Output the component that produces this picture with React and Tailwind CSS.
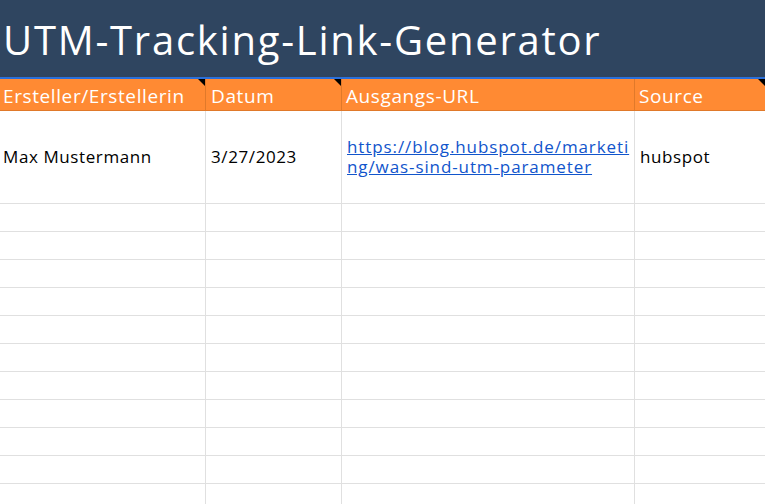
const COLS = 'grid grid-cols-[206px_136px_293px_1fr]';
const EMPTY_ROWS = 11;

function Corner() {
  return (
    <span className="absolute right-0 top-0 w-0 h-0 border-t-[7px] border-l-[7px] border-t-black border-l-transparent" />
  );
}

export default function App() {
  return (
    <div
      className="w-[765px] h-[504px] overflow-hidden bg-white"
      style={{ fontFamily: '"Open Sans", "Noto Sans", sans-serif' }}
    >
      {/* Title */}
      <div className="h-[77px] bg-[#2f4560] flex items-center pl-[3px] pt-[3px]">
        <h1 className="text-white text-[40px] leading-none tracking-[1.75px]">UTM-Tracking-Link-Generator</h1>
      </div>
      <div className="h-[2px] bg-[#2a6fdb]" />

      {/* Header row */}
      <div className={`${COLS} h-[32px] bg-[#ff8a33] text-white text-[19px] tracking-[0.6px] border-b border-[#e0792a]`}>
        <div className="relative border-r border-[#e0792a] pl-[3px] pt-[3px] flex items-center">
          Ersteller/Erstellerin
          <Corner />
        </div>
        <div className="relative border-r border-[#e0792a] pl-[5px] pt-[3px] flex items-center">
          Datum
          <Corner />
        </div>
        <div className="border-r border-[#e0792a] pl-[4px] pt-[3px] flex items-center">Ausgangs-URL</div>
        <div className="relative pl-[4px] pt-[3px] flex items-center">
          Source
          <Corner />
        </div>
      </div>

      {/* Data row */}
      <div className={`${COLS} h-[93px] border-b border-[#e0e0e0] text-[17px] text-black tracking-[0.6px]`}>
        <div className="border-r border-[#e0e0e0] pl-[3px] flex items-center">Max Mustermann</div>
        <div className="border-r border-[#e0e0e0] pl-[5px] flex items-center">3/27/2023</div>
        <div className="border-r border-[#e0e0e0] pl-[5px] flex items-center">
          <a href="#" className="text-[#1155cc] underline leading-[20px] tracking-[0.9px] whitespace-nowrap">
            https://blog.hubspot.de/marketi
            <br />
            ng/was-sind-utm-parameter
          </a>
        </div>
        <div className="pl-[5px] flex items-center">hubspot</div>
      </div>

      {/* Empty rows */}
      {Array.from({ length: EMPTY_ROWS }).map((_, i) => (
        <div key={i} className={`${COLS} h-[28px] border-b border-[#e0e0e0]`}>
          <div className="border-r border-[#e0e0e0]" />
          <div className="border-r border-[#e0e0e0]" />
          <div className="border-r border-[#e0e0e0]" />
          <div />
        </div>
      ))}
    </div>
  );
}
